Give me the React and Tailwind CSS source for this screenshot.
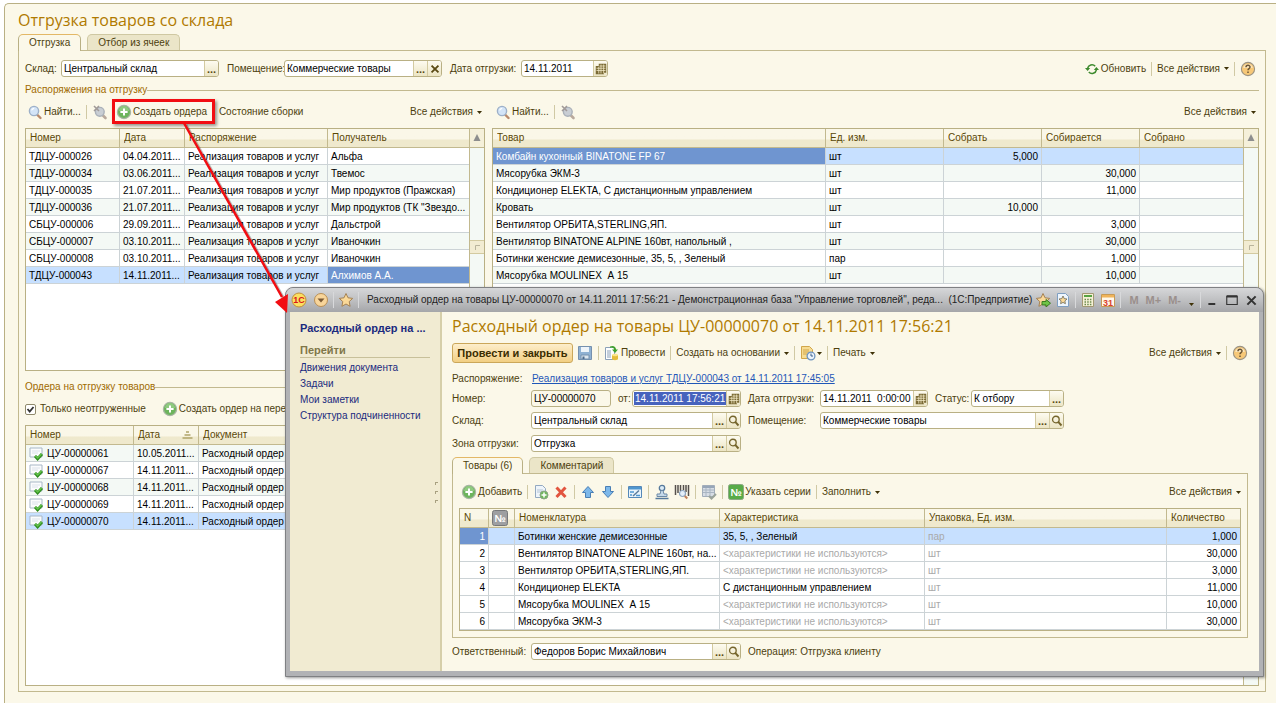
const orders = [
    ["ТДЦУ-000026", "04.04.2011...", "Реализация товаров и услуг", "Альфа"],
    ["ТДЦУ-000034", "03.06.2011...", "Реализация товаров и услуг", "Твемос"],
    ["ТДЦУ-000035", "21.07.2011...", "Реализация товаров и услуг", "Мир продуктов (Пражская)"],
    ["ТДЦУ-000036", "21.07.2011...", "Реализация товаров и услуг", "Мир продуктов (ТК \"Звездо..."],
    ["СБЦУ-000006", "29.09.2011...", "Реализация товаров и услуг", "Дальстрой"],
    ["СБЦУ-000007", "03.10.2011...", "Реализация товаров и услуг", "Иваночкин"],
    ["СБЦУ-000008", "03.10.2011...", "Реализация товаров и услуг", "Иваночкин"],
    ["ТДЦУ-000043", "14.11.2011...", "Реализация товаров и услуг", "Алхимов А.А."],
];

const goods = [
    ["Комбайн кухонный BINATONE FP 67", "шт", "5,000", "", ""],
    ["Мясорубка ЭКМ-3", "шт", "", "30,000", ""],
    ["Кондиционер ELEKTA, С дистанционным управлением", "шт", "", "11,000", ""],
    ["Кровать", "шт", "10,000", "", ""],
    ["Вентилятор ОРБИТА,STERLING,ЯП.", "шт", "", "3,000", ""],
    ["Вентилятор BINATONE ALPINE 160вт, напольный ,", "шт", "", "30,000", ""],
    ["Ботинки женские демисезонные, 35, 5, , Зеленый", "пар", "", "1,000", ""],
    ["Мясорубка MOULINEX  А 15", "шт", "", "10,000", ""],
];

const shipments = [
    ["ЦУ-00000061", "10.05.2011...", "Расходный ордер"],
    ["ЦУ-00000067", "14.11.2011...", "Расходный ордер"],
    ["ЦУ-00000068", "14.11.2011...", "Расходный ордер"],
    ["ЦУ-00000069", "14.11.2011...", "Расходный ордер"],
    ["ЦУ-00000070", "14.11.2011...", "Расходный ордер"],
];

const noTrait = "<характеристики не используются>";
const items = [
    ["1", "", "Ботинки женские демисезонные", "35, 5, , Зеленый", "пар", "1,000"],
    ["2", "", "Вентилятор BINATONE ALPINE 160вт, на...", noTrait, "шт", "30,000"],
    ["3", "", "Вентилятор ОРБИТА,STERLING,ЯП.", noTrait, "шт", "3,000"],
    ["4", "", "Кондиционер ELEKTA", "С дистанционным управлением", "шт", "11,000"],
    ["5", "", "Мясорубка MOULINEX  А 15", noTrait, "шт", "10,000"],
    ["6", "", "Мясорубка ЭКМ-3", noTrait, "шт", "30,000"],
];

/* ---------- Icons ---------- */

const Svg = ({ size = 16, children }) => (
    <svg width={size} height={size} viewBox="0 0 16 16" fill="none" className="shrink-0" aria-hidden="true">
        {children}
    </svg>
);

const FindIcon = () => (
    <Svg>
        <path d="M10 10.5l3.5 3.5" stroke="#b98a6c" strokeWidth="2.4" strokeLinecap="round" />
        <circle cx="7" cy="7" r="4.6" fill="#d3e4f7" stroke="#9db0c8" strokeWidth="1.4" />
        <path d="M4.6 6.4a2.8 2.8 0 0 1 2.6-2" stroke="#fff" strokeWidth="1.2" />
    </Svg>
);

const FindOffIcon = () => (
    <Svg>
        <path d="M10.5 11l3 3" stroke="#b9a99c" strokeWidth="2.6" strokeLinecap="round" />
        <circle cx="7.8" cy="7.8" r="4.4" fill="#c9ced4" stroke="#aab1b9" strokeWidth="1.4" />
        <path d="M2 2l5 5M7 2L2 7" stroke="#a19a98" strokeWidth="1.6" />
    </Svg>
);

const PlusIcon = () => (
    <Svg>
        <circle cx="8" cy="8" r="6.6" fill="#6db45c" stroke="#a9b5a4" strokeWidth="1.2" />
        <path d="M3 7a5 5 0 0 1 10 0z" fill="#8fca80" />
        <path d="M8 4.4v7.2M4.4 8h7.2" stroke="#fff" strokeWidth="2" />
    </Svg>
);

const RefreshIcon = () => (
    <Svg>
        <path d="M3.6 7.4a4.4 4.4 0 0 1 7.6-2.2M12.4 8.8a4.4 4.4 0 0 1-7.6 2.2" stroke="#3d8a2e" strokeWidth="1.5" />
        <path d="M1 7h5.2L3.6 10zM15 9H9.8L12.4 6z" fill="#3d8a2e" />
    </Svg>
);

const HelpIcon = () => (
    <Svg>
        <circle cx="8" cy="8" r="6.6" fill="#f7c877" stroke="#9c9484" strokeWidth="1.1" />
        <path d="M3.2 7a4.9 4.9 0 0 1 9.6 0z" fill="#fce5b8" />
        <path d="M6 6.3c0-2.6 4-2.6 4-.2 0 1.5-2 1.5-2 3.2M8 10.6v1.5" stroke="#6b5636" strokeWidth="1.5" />
    </Svg>
);

const GridIcon = () => (
    <Svg size={12}>
        <path d="M5 1h10v12h-3v2H1V4h4z" fill="#7a6a35" />
        <path d="M2 7h12M2 10h12M5 5v9M8 2v12M11.500 2v12M6 4h8" stroke="#f5edc9" strokeWidth="1" />
    </Svg>
);

const LoupeIcon = () => (
    <Svg size={12}>
        <circle cx="6.5" cy="6" r="4.4" stroke="#75652c" strokeWidth="1.8" />
        <path d="M9.600 9.200L14 14" stroke="#75652c" strokeWidth="2.6" />
    </Svg>
);

const ClearIcon = () => (
    <Svg size={10}>
        <path d="M2.500 2.500l11 11M13.500 2.500l-11 11" stroke="#5a4a14" strokeWidth="3" />
    </Svg>
);

const DocIcon = () => (
    <Svg>
        <path d="M1 2h12v9H1z" fill="#fbfcfd" stroke="#a8b7c6" />
        <path d="M3 5h8M3 7h6" stroke="#dbe2ea" />
        <path d="M6 10l2.600 2.700L13 8" stroke="#2f8c1f" strokeWidth="3" />
        <path d="M6.300 9.800l2.300 2.200L12.500 8" stroke="#63c34a" strokeWidth="1.500" />
    </Svg>
);

const SaveIcon = () => (
    <Svg>
        <path d="M1.500 1.500h13v13h-13z" fill="#8fb1d3" stroke="#7590ae" />
        <path d="M4 2h8v5H4z" fill="#eef4fa" />
        <path d="M4 10h8v4H4z" fill="#dce6ef" stroke="#7590ae" />
        <path d="M5.500 11.500h2V14h-2z" fill="#4c6a8c" />
    </Svg>
);

const PostIcon = () => (
    <Svg>
        <path d="M1.500 2.500h9v12h-9z" fill="#fdfeff" stroke="#8ba0b8" />
        <path d="M3 6h4M3 8h4M3 10h4M3 12h4" stroke="#8ba0b8" />
        <path d="M6 1.500c3-1.500 6 0 6 3h2L11 8 8 4.500h2C10 3 8 2 6 3z" fill="#3ea02c" />
        <path d="M8 10h6v4c0 1.500-6 1.500-6 0z" fill="#e6bd3c" />
        <ellipse cx="11" cy="10" rx="3" ry="1.300" fill="#fbe58b" />
    </Svg>
);

const ClockDocIcon = () => (
    <Svg>
        <path d="M1.500 1.500h8l3 3v9h-11z" fill="#f7dc92" stroke="#d1a64a" />
        <path d="M3 5h6M3 7h6M3 9h4" stroke="#d1a64a" />
        <circle cx="11" cy="11" r="3.900" fill="#eaf3fb" stroke="#6d93bd" strokeWidth="1.300" />
        <path d="M11 8.500V11h2" stroke="#3d5f8a" />
    </Svg>
);

const CopyIcon = () => (
    <Svg>
        <path d="M2.500 1.500h7l3 3v9h-10z" fill="#eef4fa" stroke="#93a9c1" />
        <path d="M4 6h6M4 8h5" stroke="#b4c4d5" />
        <circle cx="11" cy="11" r="4" fill="#6fb85c" stroke="#8aa584" />
        <path d="M11 8.500v5M8.500 11h5" stroke="#fff" strokeWidth="1.500" />
    </Svg>
);

const DeleteIcon = () => (
    <Svg>
        <path d="M3.500 3.500l9 9.500M12.500 3.500l-9 9.500" stroke="#e2553f" strokeWidth="3" />
    </Svg>
);

const ArrowIcon = ({ down }) => (
    <Svg>
        <path
            d={down ? "M5.500 2.500h5v5h3L8 13.500 2.500 7.500h3z" : "M8 2.500l5.500 6h-3v5h-5v-5h-3z"}
            fill="#7db8ea"
            stroke="#4a7fb5"
        />
    </Svg>
);

const CardIcon = () => (
    <Svg>
        <path d="M1.500 2.500h13v11h-13z" fill="#e9f4fc" stroke="#5488b8" />
        <path d="M2 3h12v2.500H2z" fill="#4f96cf" />
        <path d="M3 8h4M3 11h2M9 11.500h4" stroke="#4f96cf" strokeWidth="1.400" />
        <path d="M6 12l6-5.500" stroke="#5a7c9b" strokeWidth="1.500" />
    </Svg>
);

const StampIcon = () => (
    <Svg>
        <circle cx="8" cy="4" r="2.700" fill="#dcecf7" stroke="#55799c" strokeWidth="1.300" />
        <path d="M7 6.500h2L10 10h3v2.500H3V10h3z" fill="#c5d9ea" stroke="#6d89a5" />
        <path d="M1.500 14.500h13" stroke="#55799c" strokeWidth="1.500" />
    </Svg>
);

const BarcodeIcon = () => (
    <Svg>
        <path d="M1.500 1v10M4 1v8M6.500 1v6M9.500 1v5M12 1v7M14.500 1v11" stroke="#55504c" strokeWidth="1.500" />
        <circle cx="8.500" cy="9.500" r="3" fill="#e4effa" stroke="#8ea6c0" strokeWidth="1.200" />
        <path d="M10.800 12l2.500 2.500" stroke="#c0815c" strokeWidth="2" />
    </Svg>
);

const TableCheckIcon = () => (
    <Svg>
        <path d="M1.500 1.500h12v11h-12z" fill="#d7dde5" stroke="#a2adba" />
        <path d="M2 3h11" stroke="#97a6b8" strokeWidth="2" />
        <path d="M2 6h11M2 8.500h11M5 4v8M9 4v8" stroke="#a9b5c2" />
        <path d="M8 12l2.500 2.500L15 10" stroke="#9aa39a" strokeWidth="2" />
    </Svg>
);

const NumIcon = ({ gray }) => (
    <Svg>
        <rect x="0.500" y="0.500" width="15" height="15" rx="2" fill={gray ? "#9e9fa1" : "#58ab48"} stroke={gray ? "#77787a" : "#8aa982"} />
        <text x="8" y="12" textAnchor="middle" fontSize="10" fontWeight="bold" fill="#fff">№</text>
    </Svg>
);

const OneCIcon = () => (
    <Svg>
        <circle cx="8" cy="8" r="7" fill="#fbdf60" stroke="#c08e3c" />
        <text x="8" y="11" textAnchor="middle" fontSize="9" fontWeight="bold" fill="#d8161b">1С</text>
    </Svg>
);

const MenuIcon = () => (
    <Svg>
        <circle cx="8" cy="8" r="6.500" fill="#f8d59a" stroke="#b98f55" />
        <path d="M4.500 6.500h7L8 10.500z" fill="#7b5a35" />
    </Svg>
);

const starPath = "M8 1.500l2 4.300 4.700.6-3.500 3.200.9 4.700L8 12l-4.100 2.300.9-4.700L1.300 6.400 6 5.800z";

const StarIcon = () => (
    <Svg>
        <path d={starPath} fill="#fbd998" stroke="#a58254" />
    </Svg>
);

const StarAddIcon = () => (
    <Svg>
        <path d={starPath} fill="#fbd998" stroke="#a58254" />
        <path d="M7 9.500h4V7.500l4.500 3.700-4.500 3.700v-2H7z" fill="#6fc447" stroke="#3c7d22" />
    </Svg>
);

const StarDocIcon = () => (
    <Svg>
        <path d="M2.500 1.500h8l3 3v10h-11z" fill="#eef5fc" stroke="#7f9fc2" />
        <path d="M8 4l1.200 2.600 2.800.4-2.100 1.900.5 2.800L8 10.400l-2.400 1.300.5-2.800L4 7l2.800-.4z" fill="#fbd998" stroke="#6f6a55" strokeWidth="0.800" />
    </Svg>
);

const CalcIcon = () => (
    <Svg>
        <path d="M2.500 1.500h11v13h-11z" fill="#f5f1d6" stroke="#a39873" />
        <path d="M4 3h8v2H4z" fill="#57a343" />
        <path d="M4.500 7.500h7M4.500 10h7M4.500 12.500h7" stroke="#6b8b4c" strokeWidth="1.500" strokeDasharray="1.500 1.200" />
    </Svg>
);

const Cal31Icon = () => (
    <Svg>
        <path d="M1.500 2.500h13v12h-13z" fill="#fff8ea" stroke="#c79a55" />
        <path d="M2 3h12v2.500H2z" fill="#f0b45a" />
        <text x="8" y="13.500" textAnchor="middle" fontSize="9" fontWeight="bold" fill="#d9422c">31</text>
    </Svg>
);

const Caret = ({ tight }) => (
    <svg width="5" height="3" viewBox="0 0 5 3" className={`shrink-0 ${tight ? "ml-px" : "ml-1"}`} aria-hidden="true">
        <path d="M0 0h5L2.500 3z" fill="#3f3208" />
    </svg>
);

/* ---------- Controls ---------- */

const Tool = ({ icon, children, menu, label }) => (
    <button type="button" aria-label={label} className="flex h-5 shrink-0 items-center whitespace-nowrap text-[#4d3f0e]">
        {icon}
        {children && <span className={icon ? "ml-px" : ""}>{children}</span>}
        {menu && <Caret tight={!children} />}
    </button>
);

const Sep = () => <span className="mx-[5px] h-[14px] w-px shrink-0 bg-[#d0c9a4]" />;

const Field = ({ id, label, value, labelClass = "", className = "", buttons = [], readOnly, selected }) => (
    <div className="flex h-[17px] shrink-0 items-center">
        <label htmlFor={id} className={`shrink-0 whitespace-nowrap ${labelClass}`}>{label}</label>
        <div className={`flex h-[17px] items-stretch overflow-hidden rounded-[3px] border border-[#b9b084] ${readOnly ? "bg-[#fbf8e9]" : "bg-white"} ${className}`}>
            <input
                id={id}
                defaultValue={value}
                readOnly={readOnly}
                className={`min-w-0 flex-1 outline-none ${selected ? "my-px ml-px bg-[#4763bd] px-px text-white" : "px-[2px] text-black"}`}
            />
            {buttons.map((kind) => (
                <button
                    key={kind}
                    type="button"
                    aria-label={kind}
                    className="flex w-[14px] shrink-0 items-center justify-center border-l border-[#d3caa0] bg-linear-to-b from-[#fdfbf0] to-[#ece5c4] text-[11px] font-bold text-[#5a4a14]"
                >
                    {kind === "Выбрать" && "..."}
                    {kind === "Очистить" && <ClearIcon />}
                    {kind === "Календарь" && <GridIcon />}
                    {kind === "Открыть" && <LoupeIcon />}
                </button>
            ))}
        </div>
    </div>
);

const Tabs = ({ tabs }) => (
    <div role="tablist" className="relative z-10 -mb-px flex items-end gap-[6px]">
        {tabs.map((tab, index) => (
            <button
                key={tab}
                type="button"
                role="tab"
                aria-selected={index === 0}
                className={
                    index === 0
                        ? "h-[17px] rounded-t-[5px] border border-b-0 border-[#b9b084] border-t-[#e3b866] bg-[#fbf8e9] px-[10px]"
                        : "mb-px h-4 rounded-t-[5px] border border-b-0 border-[#cfc8a2] bg-[#ebe5c8] px-[10px]"
                }
            >
                {tab}
            </button>
        ))}
    </div>
);

const GroupTitle = ({ children }) => (
    <div className="flex h-[14px] items-center">
        <h2 className="text-[#a06a00]">{children}</h2>
        <span className="h-px flex-1 bg-[#c2b98f]" />
    </div>
);

const Table = ({ cols, rows, selected, current, firstStriped, striped = true, renderCell }) => (
    <table className="w-full table-fixed border-separate border-spacing-0">
        <colgroup>
            {cols.map((col) => <col key={col.title} className={col.width} />)}
        </colgroup>
        <thead>
            <tr className="h-[19px] bg-linear-to-b from-[#faf7e8] from-50% to-[#efe9cd] to-60%">
                {cols.map((col, i) => (
                    <th
                        key={col.title}
                        className={`border-b border-[#c2b98f] p-0 text-left font-normal text-[#5a4705] ${i < cols.length - 1 ? "border-r" : ""} ${col.icon ? "pl-[3px]" : "pl-1"}`}
                    >
                        <div className="flex items-center justify-between overflow-hidden whitespace-nowrap leading-4">
                            {col.icon || col.title}
                            {col.sorted && (
                                <svg width="11" height="8" viewBox="0 0 11 8" className="mr-[5px]" aria-hidden="true">
                                    <path d="M4 1h3M2.500 4h6M.5 7h10" stroke="#b0a468" strokeWidth="1.500" />
                                </svg>
                            )}
                        </div>
                    </th>
                ))}
            </tr>
        </thead>
        <tbody>
            {rows.map((row, r) => {
                const odd = striped && r % 2 === (firstStriped ? 0 : 1);
                const bg = r === selected ? "bg-[#c7e0ff]" : odd ? "bg-[#f4f9f5]" : "bg-white";
                return (
                    <tr key={r} className={`h-[17px] ${bg}`}>
                        {row.map((cell, c) => (
                            <td
                                key={c}
                                className={`overflow-hidden border-b border-[#ccd3d6] px-[3px] pt-[2px] pb-0 leading-[14px] whitespace-pre ${c < row.length - 1 ? "border-r" : ""} ${cols[c].right ? "text-right" : ""} ${r === selected && c === current ? "bg-[#6f95d0] text-white" : cols[c].muted || cell === noTrait ? "text-[#a9a9a9]" : "text-black"}`}
                            >
                                {renderCell ? renderCell(cell, c) : cell}
                            </td>
                        ))}
                    </tr>
                );
            })}
        </tbody>
    </table>
);

const ScrollBar = () => (
    <div className="flex w-[15px] shrink-0 flex-col border-l border-[#c2b98f] bg-[#f4f9f5]">
        <div className="flex h-[19px] items-center justify-center border-b border-[#c2b98f] bg-[#f5f0da]">
            <svg width="8" height="8" viewBox="0 0 8 8" aria-hidden="true"><path d="M4 0l3.500 7h-7z" fill="#8d8d8d" /></svg>
        </div>
        <div className="flex-4" />
        <div className="flex h-[14px] items-center justify-center border-y border-[#d3caa0] bg-[#f2ecd2]">
            <svg width="5" height="5" viewBox="0 0 5 5" aria-hidden="true"><path d="M.5 5V.5H5" stroke="#b9b49c" fill="none" /></svg>
        </div>
        <div className="flex-5" />
    </div>
);

const SplitTable = ({ children }) => (
    <div className="mt-[6px] flex min-h-[243px] border border-[#b9b084] bg-white">
        <div className="min-w-0 flex-1">{children}</div>
        <ScrollBar />
    </div>
);

/* ---------- Document window ---------- */

const TitleBar = () => (
    <header className="flex h-6 items-center bg-linear-to-b from-[#d6d7d9] via-[#bfc0c2] to-[#a5a6a9] pr-[6px] pl-[5px] text-[#222]">
        <button type="button" aria-label="1С"><OneCIcon /></button>
        <button type="button" aria-label="Меню" className="ml-[6px]"><MenuIcon /></button>
        <span className="mx-1 h-4 w-px bg-[#d8d9db]" />
        <button type="button" aria-label="Избранное"><StarIcon /></button>
        <span className="mx-1 h-4 w-px bg-[#d8d9db]" />
        <span className="ml-1 min-w-0 flex-1 truncate">
            Расходный ордер на товары ЦУ-00000070 от 14.11.2011 17:56:21 - Демонстрационная база "Управление торговлей", реда...&nbsp; (1С:Предприятие)
        </span>
        <div className="flex shrink-0 items-center">
            <button type="button" aria-label="Добавить в избранное"><StarAddIcon /></button>
            <button type="button" aria-label="Ссылка" className="ml-1"><StarDocIcon /></button>
            <span className="mx-1 h-4 w-px bg-[#d8d9db]" />
            <button type="button" aria-label="Калькулятор"><CalcIcon /></button>
            <button type="button" aria-label="Календарь" className="ml-1"><Cal31Icon /></button>
            <span className="mx-1 h-4 w-px bg-[#d8d9db]" />
            <div className="flex gap-[7px] pl-1 text-[11px] font-bold text-[#9a8f8c]">
                <button type="button">M</button>
                <button type="button">M+</button>
                <button type="button">M-</button>
            </div>
            <button type="button" aria-label="Ещё" className="ml-1 flex h-3 items-end"><Caret /></button>
            <span className="mx-[6px] h-4 w-px bg-[#d8d9db]" />
            <div className="flex items-center gap-[8px]">
                <button type="button" aria-label="Свернуть">
                    <Svg size={11}><path d="M2 13h10" stroke="#333" strokeWidth="3" /></Svg>
                </button>
                <button type="button" aria-label="Развернуть">
                    <Svg size={12}><path d="M1 3h14v11H1z" stroke="#333" strokeWidth="1.500" /><path d="M1 3h14" stroke="#333" strokeWidth="3" /></Svg>
                </button>
                <button type="button" aria-label="Закрыть">
                    <Svg size={11}><path d="M2 2l12 12M14 2L2 14" stroke="#333" strokeWidth="3" /></Svg>
                </button>
            </div>
        </div>
    </header>
);

const SideNav = () => (
    <nav className="relative w-[152px] shrink-0 border-r-2 border-[#d6cfaa] bg-[#f1ebd2] px-[10px] pt-2 text-[#1a2a7e]">
        <p className="truncate text-[11px] font-bold leading-4">Расходный ордер на ...</p>
        <h3 className="mt-[7px] border-b border-[#c8c09a] text-[11px] font-bold leading-[14px] text-[#7f7648]">Перейти</h3>
        <ul className="mt-[2px] leading-4 whitespace-nowrap">
            {["Движения документа", "Задачи", "Мои заметки", "Структура подчиненности"].map((item) => (
                <li key={item}><a href="#">{item}</a></li>
            ))}
        </ul>
        {/* Splitter handle */}
        <div className="absolute top-[170px] right-[2px] flex flex-col gap-[6px]">
            <span className="size-[3px] border-t border-l border-[#a8a080]" />
            <span className="size-[3px] border-t border-l border-[#a8a080]" />
            <span className="size-[3px] border-t border-l border-[#a8a080]" />
        </div>
    </nav>
);

const itemCols = [
    { title: "N", width: "w-[29px]", right: true },
    { title: "№", width: "w-[26px]", icon: <NumIcon gray /> },
    { title: "Номенклатура", width: "w-[205px]" },
    { title: "Характеристика", width: "w-[205px]" },
    { title: "Упаковка, Ед. изм.", muted: true },
    { title: "Количество", width: "w-[73px]", right: true },
];

const OrderWindow = () => (
    <section className="absolute top-[287px] right-3 left-[285px] overflow-hidden rounded-t-[8px] border border-[#7f8083] bg-[#b1b2b5] shadow-[1px_1px_3px_rgba(0,0,0,0.4)]">
        <TitleBar />
        <div className="mx-1 mb-[5px] flex bg-[#fbf8e9]">
            <SideNav />
            <div className="min-w-0 flex-1 pt-1 pr-[11px] pb-[11px] pl-[10px]">
                <h2 className="font-['Open_Sans',sans-serif] text-base leading-5 text-[#b07a00]">
                    Расходный ордер на товары ЦУ-00000070 от 14.11.2011 17:56:21
                </h2>

                <div className="mt-[7px] flex items-center">
                    <button type="button" className="h-5 w-[121px] shrink-0 whitespace-nowrap rounded-[3px] border border-[#cba75a] bg-linear-to-b from-[#fdeecb] to-[#f2cf83] text-[11px] font-bold text-[#3b2d00]">
                        Провести и закрыть
                    </button>
                    <span className="w-1" />
                    <Tool icon={<SaveIcon />} label="Записать" />
                    <Sep />
                    <Tool icon={<PostIcon />}>Провести</Tool>
                    <Sep />
                    <Tool menu>Создать на основании</Tool>
                    <Sep />
                    <Tool icon={<ClockDocIcon />} label="Отчеты" menu />
                    <Sep />
                    <Tool menu>Печать</Tool>
                    <span className="flex-1" />
                    <Tool menu>Все действия</Tool>
                    <Sep />
                    <Tool icon={<HelpIcon />} label="Справка" />
                </div>

                <div className="mt-[7px] flex h-[17px] items-center">
                    <span className="w-[80px]">Распоряжение:</span>
                    <a href="#" className="text-[#1f57b8] underline">Реализация товаров и услуг ТДЦУ-000043 от 14.11.2011 17:45:05</a>
                </div>
                <div className="mt-[3px] flex gap-[7px]">
                    <Field id="num" label="Номер:" labelClass="w-[79px]" className="w-[80px]" value="ЦУ-00000070" readOnly />
                    <Field id="date" label="от:" labelClass="w-[14px]" className="w-[109px]" value="14.11.2011 17:56:21" buttons={["Календарь"]} selected />
                    <Field id="ship" label="Дата отгрузки:" labelClass="w-[72px]" className="w-[108px]" value="14.11.2011  0:00:00" buttons={["Календарь"]} />
                    <Field id="status" label="Статус:" labelClass="w-[36px]" className="w-[93px]" value="К отбору" buttons={["Выбрать"]} />
                </div>
                <div className="mt-[5px] flex gap-[7px]">
                    <Field id="store" label="Склад:" labelClass="w-[79px]" className="w-[210px]" value="Центральный склад" buttons={["Выбрать", "Открыть"]} />
                    <Field id="room" label="Помещение:" labelClass="w-[72px]" className="w-[244px]" value="Коммерческие товары" buttons={["Выбрать", "Открыть"]} />
                </div>
                <div className="mt-[6px] flex">
                    <Field id="zone" label="Зона отгрузки:" labelClass="w-[79px]" className="w-[210px]" value="Отгрузка" buttons={["Выбрать", "Открыть"]} />
                </div>

                <div className="mt-[5px]">
                    <Tabs tabs={["Товары (6)", "Комментарий"]} />
                    <div className="border border-[#c2b98f] px-[6px] pt-2 pb-[6px]">
                        <div className="flex items-center pl-[2px]">
                            <Tool icon={<PlusIcon />}>Добавить</Tool>
                            <Sep />
                            <div className="flex gap-1">
                                <Tool icon={<CopyIcon />} label="Скопировать" />
                                <Tool icon={<DeleteIcon />} label="Удалить" />
                            </div>
                            <Sep />
                            <div className="flex gap-1">
                                <Tool icon={<ArrowIcon />} label="Вверх" />
                                <Tool icon={<ArrowIcon down />} label="Вниз" />
                            </div>
                            <Sep />
                            <Tool icon={<CardIcon />} label="Изменить" />
                            <Sep />
                            <div className="flex gap-1">
                                <Tool icon={<StampIcon />} label="Печать" />
                                <Tool icon={<BarcodeIcon />} label="Штрихкод" />
                            </div>
                            <Sep />
                            <Tool icon={<TableCheckIcon />} label="Таблица" />
                            <Sep />
                            <Tool icon={<NumIcon />}>Указать серии</Tool>
                            <Sep />
                            <Tool menu>Заполнить</Tool>
                            <span className="flex-1" />
                            <Tool menu>Все действия</Tool>
                        </div>
                        <div className="mt-[6px] border border-[#b9b084]">
                            <Table cols={itemCols} rows={items} selected={0} current={0} striped={false} />
                        </div>
                    </div>
                </div>

                <div className="mt-[5px] flex items-center gap-[7px]">
                    <Field id="owner" label="Ответственный:" labelClass="w-[79px]" className="w-[210px]" value="Федоров Борис Михайлович" buttons={["Выбрать", "Открыть"]} />
                    <span>Операция: Отгрузка клиенту</span>
                </div>
            </div>
        </div>
    </section>
);

/* ---------- Page ---------- */

const orderCols = [
    { title: "Номер", width: "w-[94px]" },
    { title: "Дата", width: "w-[65px]" },
    { title: "Распоряжение", width: "w-[143px]" },
    { title: "Получатель" },
];

const goodsCols = [
    { title: "Товар" },
    { title: "Ед. изм.", width: "w-[118px]" },
    { title: "Собрать", width: "w-[98px]", right: true },
    { title: "Собирается", width: "w-[98px]", right: true },
    { title: "Собрано", width: "w-[103px]", right: true },
];

const shipmentCols = [
    { title: "Номер", width: "w-[108px]" },
    { title: "Дата", width: "w-[65px]", sorted: true },
    { title: "Документ" },
];

const App = () => (
    <div className="relative overflow-hidden bg-white pt-[3px] pb-[2px] pl-1 font-['Liberation_Sans',Arial,sans-serif] text-[10px] leading-[14px] text-[#4d3f0e]">
        <main className="rounded-tl-[5px] border-t border-l border-[#b9b084] bg-[#fbf8e9] pt-[6px] pr-[10px] pb-[11px] pl-[13px]">
            <h1 className="font-['Open_Sans',sans-serif] text-base leading-5 text-[#b07a00]">Отгрузка товаров со склада</h1>

            <div className="mt-1">
                <Tabs tabs={["Отгрузка", "Отбор из ячеек"]} />
                <div className="border border-[#c2b98f] px-[6px] pt-[9px] pb-[5px]">
                    {/* Filters */}
                    <div className="flex h-[17px] items-center gap-2">
                        <Field id="f-store" label="Склад:" labelClass="w-[36px]" className="w-[158px]" value="Центральный склад" buttons={["Выбрать"]} />
                        <Field id="f-room" label="Помещение:" labelClass="w-[57px]" className="w-[158px]" value="Коммерческие товары" buttons={["Выбрать", "Очистить"]} />
                        <Field id="f-date" label="Дата отгрузки:" labelClass="w-[71px]" className="w-[87px]" value="14.11.2011" buttons={["Календарь"]} />
                        <div className="ml-auto flex items-center pr-[3px]">
                            <Tool icon={<RefreshIcon />}>Обновить</Tool>
                            <Sep />
                            <Tool menu>Все действия</Tool>
                            <Sep />
                            <Tool icon={<HelpIcon />} label="Справка" />
                        </div>
                    </div>

                    <div className="mt-[6px]">
                        <GroupTitle>Распоряжения на отгрузку</GroupTitle>
                    </div>
                    <div className="mt-[5px] grid grid-cols-[460px_1fr] gap-x-[7px]">
                        <div>
                            <div className="flex items-center pr-[3px] pl-[2px]">
                                <Tool icon={<FindIcon />}>Найти...</Tool>
                                <Sep />
                                <Tool icon={<FindOffIcon />} label="Отменить поиск" />
                                <div className="relative ml-2 w-[103px]">
                                    <Tool icon={<PlusIcon />}>Создать ордера</Tool>
                                    <span className="absolute -top-[3px] -left-1 h-[25px] w-[103px] border-3 border-[#f20d12] shadow-[2px_2px_3px_rgba(0,0,0,0.4)]" />
                                </div>
                                <Tool>Состояние сборки</Tool>
                                <span className="flex-1" />
                                <Tool menu>Все действия</Tool>
                            </div>
                            <SplitTable>
                                <Table cols={orderCols} rows={orders} selected={7} current={3} />
                            </SplitTable>
                        </div>
                        <div className="min-w-0">
                            <div className="flex items-center pr-[3px] pl-[3px]">
                                <Tool icon={<FindIcon />}>Найти...</Tool>
                                <Sep />
                                <Tool icon={<FindOffIcon />} label="Отменить поиск" />
                                <span className="flex-1" />
                                <Tool menu>Все действия</Tool>
                            </div>
                            <SplitTable>
                                <Table cols={goodsCols} rows={goods} selected={0} current={0} />
                            </SplitTable>
                        </div>
                    </div>

                    <div className="mt-[9px]">
                        <GroupTitle>Ордера на отгрузку товаров</GroupTitle>
                    </div>
                    <div className="mt-[5px] flex h-5 items-center">
                        <span className="relative flex">
                            <input id="only" type="checkbox" defaultChecked className="peer size-[11px] appearance-none rounded-[2px] border border-[#8f8a6c] bg-white" />
                            <svg width="11" height="11" viewBox="0 0 11 11" className="pointer-events-none absolute inset-0 hidden peer-checked:block" aria-hidden="true">
                                <path d="M2.500 5l2.200 2.600L8.500 3" stroke="#333" strokeWidth="1.800" fill="none" />
                            </svg>
                        </span>
                        <label htmlFor="only" className="mr-4 ml-1">Только неотгруженные</label>
                        <Tool icon={<PlusIcon />}>Создать ордер на пере</Tool>
                    </div>
                    <div className="mt-[6px] flex min-h-[261px] border border-[#b9b084] bg-white">
                        <div className="min-w-0 flex-1">
                            <Table
                                cols={shipmentCols}
                                rows={shipments}
                                selected={4}
                                firstStriped
                                renderCell={(cell, c) =>
                                    c === 0 ? <span className="flex h-[14px] items-center gap-[2px]"><DocIcon />{cell}</span> : cell
                                }
                            />
                        </div>
                        <ScrollBar />
                    </div>
                </div>
            </div>
        </main>

        <OrderWindow />

        {/* Callout arrow from the button to the opened window */}
        <svg width="120" height="200" viewBox="0 0 120 200" className="absolute top-[120px] left-[180px]" aria-hidden="true">
            <path d="M6 5l98 174" stroke="#00000040" strokeWidth="3" />
            <path d="M4 3l98 174" stroke="#f20d12" strokeWidth="2.500" />
            <path d="M95 182l13-8-1 19z" fill="#f20d12" />
        </svg>
    </div>
);

export default App;
